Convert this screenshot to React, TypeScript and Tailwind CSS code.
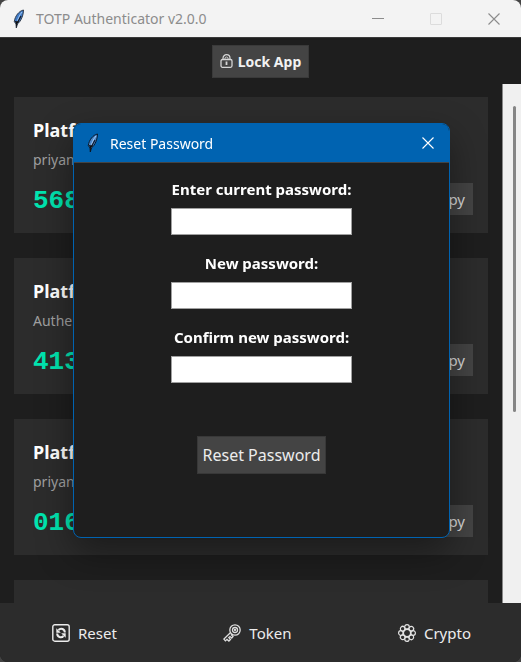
import type { ReactNode } from "react";

type Account = { platform: string; owner: string; code: string };

const accounts: Account[] = [
  { platform: "Platform", owner: "priyan", code: "568" },
  { platform: "Platform", owner: "Authenticator", code: "413" },
  { platform: "Platform", owner: "priyan", code: "016" },
];

function Feather({ body, edge }: { body: string; edge: string }) {
  return (
    <svg width="14" height="20" viewBox="0 0 14 20" aria-hidden="true">
      <path d="M11.5 1C7 2 3 7 2.300 12.500L4 15L4.300 19L5.500 14.800C9 12.500 11.500 6 11.500 1Z" fill={body} stroke={edge} strokeWidth="1" />
      <path d="M10 3C7.500 6 5.500 10 4.500 15.500" fill="none" stroke="#a9cdf5" strokeWidth="1" />
      <path d="M9 7L5.500 13.500" stroke="#111827" strokeWidth="1.200" />
      <path d="M2.500 12L4 14L4.300 19L5.500 14.500L7 12.500" fill="#111" />
    </svg>
  );
}

function CloseGlyph() {
  return (
    <svg width="12" height="12" viewBox="0 0 12 12" stroke="currentColor" strokeWidth="1.100" aria-hidden="true">
      <path d="M0.500 0.500L11.500 11.500M11.500 0.500L0.500 11.500" />
    </svg>
  );
}

function LockIcon() {
  return (
    <svg width="13" height="14" viewBox="0 0 13 14" fill="none" stroke="#d6d6d6" aria-hidden="true">
      <path d="M3 6V4.200a3.500 3.500 0 0 1 7 0V6" strokeWidth="1.200" />
      <path d="M5 6V4.500a1.500 1.500 0 0 1 3 0V6" strokeWidth="0.900" />
      <rect x="1" y="5.500" width="11" height="7.800" rx="1.500" strokeWidth="1.300" />
      <path d="M6.500 7.500v3.500" strokeWidth="1.800" />
    </svg>
  );
}

function ResetIcon() {
  return (
    <svg width="18" height="18" viewBox="0 0 18 18" fill="none" stroke="#ececec" aria-hidden="true">
      <rect x="0.800" y="0.800" width="16.400" height="16.400" rx="2" strokeWidth="1.400" />
      <path d="M12.800 8.500A3.600 3.600 0 0 0 6.500 6M5.200 9.500a3.600 3.600 0 0 0 6.300 2.500" strokeWidth="2" />
      <path d="M4.300 4.300v4.500h4.500zM13.700 13.700v-4.500h-4.500z" fill="#ececec" stroke="none" />
    </svg>
  );
}

function KeyIcon() {
  return (
    <svg width="18" height="18" viewBox="0 0 18 18" fill="none" stroke="#dedede" strokeWidth="1.300" aria-hidden="true">
      <circle cx="12" cy="6" r="5.200" />
      <circle cx="12" cy="6" r="2.500" />
      <circle cx="12" cy="6" r="0.500" />
      <path d="M7.600 8.500L0.900 15.100L2.400 16.900L4 15.400L5.900 17.100L7.500 15.500L5.800 13.600L7 12.500L8.700 14L10 12.600L8.500 11L9.600 10.400" />
    </svg>
  );
}

function FlowerIcon() {
  const petals = [0, 45, 90, 135, 180, 225, 270, 315];
  return (
    <svg width="18" height="18" viewBox="0 0 18 18" fill="none" stroke="#e2e2e2" strokeWidth="1.200" aria-hidden="true">
      {petals.map((a) => (
        <circle key={a} cx="9" cy="2.900" r="2.300" transform={`rotate(${a} 9 9)`} />
      ))}
      <circle cx="9" cy="9" r="3.700" strokeWidth="1.500" />
    </svg>
  );
}

function AccountCard({ platform, owner, code }: Account) {
  return (
    <li className="flex h-[136px] shrink-0 items-end justify-between bg-[#2c2c2c] pr-[15px] pb-[18px] pl-[19px]">
      <div className="self-start pt-5">
        <h2 className="text-[18px] leading-[26px] font-bold text-white">{platform}</h2>
        <p className="mt-1 text-[14px] leading-[26px] text-[#a0a0a0]">{owner}</p>
        <p className="mt-3 font-['Liberation_Mono',monospace] text-[26px] leading-8 font-bold text-[#00e5b0]">{code}</p>
      </div>
      <button type="button" className="h-8 bg-[#444] px-2 text-[15px] text-[#d8d8d8]">
        Copy
      </button>
    </li>
  );
}

function PasswordField({ id, label }: { id: string; label: string }) {
  return (
    <div className="flex flex-col items-center gap-[9px]">
      <label htmlFor={id} className="text-[15px] leading-5 font-bold text-white">
        {label}
      </label>
      <input
        id={id}
        type="password"
        className="h-[27px] w-[181px] border border-[#a0a0a0] bg-white px-1 text-sm text-black outline-none"
      />
    </div>
  );
}

function FooterButton({ icon, children }: { icon: ReactNode; children: ReactNode }) {
  return (
    <button type="button" className="flex items-center gap-2 text-[15px] text-[#ececec]">
      {icon}
      {children}
    </button>
  );
}

function ResetDialog() {
  return (
    <div className="fixed inset-0 flex items-center justify-center pb-px pl-0.5">
      <section
        role="dialog"
        aria-labelledby="dialog-title"
        className="w-[377px] overflow-hidden rounded-lg border border-[#0063b1] bg-[#1e1e1e] shadow-[0_14px_36px_rgba(0,0,0,0.4)]"
      >
        <header className="flex h-[38px] items-center bg-[#0063b1] pr-[15px] pl-3 text-white">
          <Feather body="#4a86c8" edge="#0b1a2c" />
          <h1 id="dialog-title" className="ml-2.5 flex-1 text-[14px]">
            Reset Password
          </h1>
          <button type="button" aria-label="Close dialog">
            <CloseGlyph />
          </button>
        </header>
        <form className="flex flex-col items-center border-t border-[#444] pt-4 pb-[63px]" onSubmit={(e) => e.preventDefault()}>
          <div className="flex flex-col gap-[18px]">
            <PasswordField id="current" label="Enter current password:" />
            <PasswordField id="new" label="New password:" />
            <PasswordField id="confirm" label="Confirm new password:" />
          </div>
          <button type="submit" className="mt-[53px] h-[38px] w-[129px] border border-[#383838] bg-[#444] text-[16px] text-[#ececec]">
            Reset Password
          </button>
        </form>
      </section>
    </div>
  );
}

export default function App() {
  return (
    <div className="bg-[#444]">
      <div className="flex h-screen flex-col overflow-hidden rounded-lg bg-[#1e1e1e] font-['Noto_Sans',sans-serif]">
        <header className="flex h-[38px] shrink-0 items-center border-b border-[#3a3a3a] bg-[#f3f3f3] pr-[21px] pl-3 text-[#8c8c8c]">
          <Feather body="#3d78c4" edge="#333f50" />
          <span className="ml-2.5 flex-1 text-[14px]">TOTP Authenticator v2.0.0</span>
          <div className="flex items-center gap-[46px]">
            <button type="button" aria-label="Minimize" className="h-px w-3 bg-[#8c8c8c]" />
            <button type="button" aria-label="Maximize" className="size-3 rounded-[1px] border border-[#dcdcdc]" />
            <button type="button" aria-label="Close">
              <CloseGlyph />
            </button>
          </div>
        </header>

        <div className="flex h-[46px] shrink-0 items-center justify-center">
          <button type="button" className="flex h-[33px] items-center gap-[5px] border border-[#3a3a3a] bg-[#444] px-[7px] text-[14px] font-bold text-[#f2f2f2]">
            <LockIcon />
            Lock App
          </button>
        </div>

        <main className="flex min-h-0 flex-1">
          <ul className="flex flex-1 flex-col gap-[25px] overflow-hidden px-[14px] pt-[13px]">
            {accounts.map((account, i) => (
              <AccountCard key={i} {...account} />
            ))}
            <li className="h-[136px] shrink-0 bg-[#2c2c2c]" />
          </ul>
          <div className="flex w-[19px] justify-center border-l border-[#888] bg-[#f0f0f0] pt-[22px] pl-1">
            <div className="h-[306px] w-[3px] rounded-full bg-[#858585]" />
          </div>
        </main>

        <footer className="flex h-[59px] shrink-0 items-center justify-between bg-[#2c2c2c] pt-px pr-[50px] pl-[52px]">
          <FooterButton icon={<ResetIcon />}>Reset</FooterButton>
          <FooterButton icon={<KeyIcon />}>Token</FooterButton>
          <FooterButton icon={<FlowerIcon />}>Crypto</FooterButton>
        </footer>
      </div>
      <ResetDialog />
    </div>
  );
}
